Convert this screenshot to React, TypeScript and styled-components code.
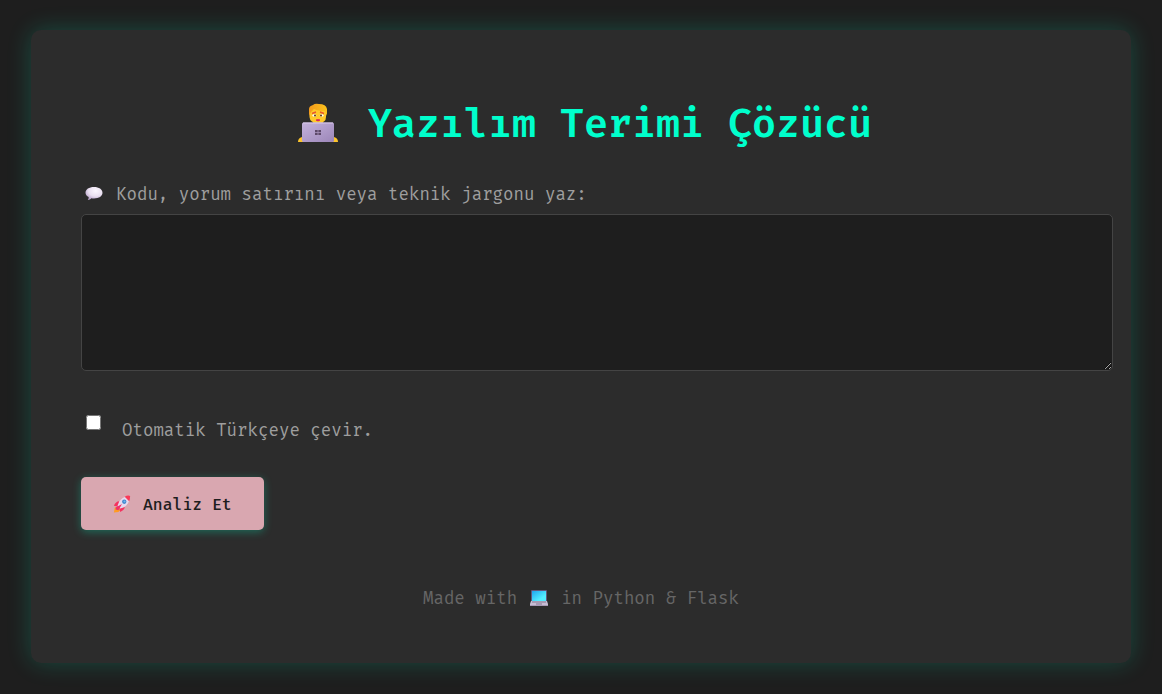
import React from "react";
import styled, { createGlobalStyle } from "styled-components";

const GlobalStyle = createGlobalStyle`
  body {
    margin: 0;
    background: #1e1e1e;
    color: #9e9e9e;
    font-family: "Fira Code", "DejaVu Sans Mono", monospace;
    font-size: 17px;
    line-height: 24px;
  }
`;

const Page = styled.div`
  padding: 30px;
`;

const Card = styled.main`
  box-sizing: border-box;
  max-width: 1100px;
  margin: 0 auto;
  padding: 63px 50px 53px;
  border-radius: 10px;
  background: #2c2c2c;
  box-shadow: 0 0 25px rgba(0, 255, 200, 0.2);
`;

const Title = styled.h1`
  display: flex;
  align-items: center;
  justify-content: center;
  gap: 30px;
  margin: 0;
  padding-left: 8px;
  color: #00ffcc;
  font-size: 39px;
  font-weight: 600;
  line-height: 56px;
`;

const TitleText = styled.span`
  padding-top: 4px;
`;

const Form = styled.form`
  margin: 29px 0 0;
`;

const Caption = styled.span`
  padding-top: 2px;
  line-height: 22px;
`;

const FieldLabel = styled.label`
  display: flex;
  align-items: center;
  gap: 13px;
  padding-left: 4px;
`;

const CodeInput = styled.textarea`
  display: block;
  width: 100%;
  height: 125px;
  margin: 8px 0 0;
  padding: 15px;
  border: 1px solid #444444;
  border-radius: 5px;
  background: #1e1e1e;
  color: #f0f0f0;
  font: inherit;
  resize: vertical;
`;

const CheckRow = styled.div`
  display: flex;
  align-items: flex-start;
  gap: 21px;
  margin-top: 44px;
  padding-left: 5px;
`;

const Checkbox = styled.input`
  width: 15px;
  height: 15px;
  margin: 0;
`;

const CheckLabel = styled.label`
  padding-top: 4px;
`;

const SubmitButton = styled.button`
  display: flex;
  align-items: center;
  gap: 12px;
  margin-top: 34px;
  padding: 15px 32px 14px;
  border: 0;
  border-radius: 5px;
  background: #d9a7b0;
  color: #1e1e1e;
  font: inherit;
  font-size: 16px;
  font-weight: 500;
  box-shadow: 0 2px 8px rgba(0, 255, 200, 0.3);
  cursor: pointer;
`;

const Footer = styled.footer`
  display: flex;
  align-items: center;
  justify-content: center;
  gap: 13px;
  margin-top: 56px;
  color: #666666;
`;

const Icon = styled.svg<{ $size: number }>`
  flex: none;
  display: block;
  width: ${(p) => p.$size}px;
  height: ${(p) => p.$size}px;
`;

const CoderIcon = () => (
  <Icon $size={40} viewBox="0 0 40 40" aria-hidden="true">
    <defs>
      <linearGradient id="lid" x1="0" y1="0" x2="1" y2="1">
        <stop offset="0" stopColor="#c4b2dc" />
        <stop offset="1" stopColor="#9c86b8" />
      </linearGradient>
      <linearGradient id="hair" x1="0" y1="0" x2="1" y2="0">
        <stop offset="0" stopColor="#f39a1d" />
        <stop offset="1" stopColor="#fcc21b" />
      </linearGradient>
    </defs>
    <path d="M0 39q0-4 4-5h32q4 1 4 5z" fill="#fdc52c" />
    <path d="M15 15h10v6H15z" fill="#ef9c1c" />
    <path d="M11.500 6h16.500v8q0 6-8 6t-8.500-6z" fill="#ffc929" />
    <path d="M11 13V6q0-3 4-4 2-2 6-1 7 0 8 5v7l-2-5q-7 0-11-2l-3 3z" fill="url(#hair)" />
    <path d="M14 10.500l4-1.500M22 9l4 1.500" stroke="#e8562e" strokeWidth="1.400" />
    <ellipse cx="16.300" cy="12.400" rx="1.900" ry="1.200" fill="#fff" />
    <ellipse cx="23.700" cy="12.400" rx="1.900" ry="1.200" fill="#fff" />
    <circle cx="17" cy="12.500" r="1.100" fill="#65452f" />
    <circle cx="23" cy="12.500" r="1.100" fill="#65452f" />
    <path d="M18 17q2-.8 4 0-2 2-4 0" fill="#d81f58" stroke="#d81f58" strokeWidth=".8" />
    <rect x="4" y="19.500" width="32" height="19.500" rx="1.500" fill="url(#lid)" />
    <path d="M5 20h30" stroke="#d9c9e9" />
    <path d="M17 27h6v5h-6z" fill="#5c4869" />
    <path d="M17 29.500h6M20 27v5" stroke="#a793bd" strokeWidth=".8" />
  </Icon>
);

const SpeechIcon = () => (
  <Icon $size={18} viewBox="0 0 18 18" aria-hidden="true">
    <defs>
      <radialGradient id="bubble" cx=".6" cy=".3" r=".7">
        <stop offset="0" stopColor="#fcf7ff" />
        <stop offset=".6" stopColor="#e9dff0" />
        <stop offset="1" stopColor="#baa4cb" />
      </radialGradient>
    </defs>
    <path
      d="M9 2c5 0 8.500 2.300 8.500 5.800S14 13.500 9 13.500c-1 0-2-.1-2.700-.3C5.500 14.300 4 15 2.800 14.900c.7-.8 1-1.700.9-2.800C1.700 11.200.5 9.600.5 7.800.5 4.300 4 2 9 2z"
      fill="url(#bubble)"
    />
  </Icon>
);

const RocketIcon = () => (
  <Icon $size={18} viewBox="0 0 20 20" aria-hidden="true">
    <path d="M2 14l4-1 2 4-2 2-5 .5z" fill="#ff9b23" />
    <path d="M7 7q-4 0-6 5l5 1zM13 13q0 4-5 6l-1-5z" fill="#f5325f" />
    <path d="M5 12Q7 4 14 2l4 4q-2 7-10 9z" fill="#e6d9ee" />
    <path d="M13 2q3-2 6-1 0 3-1 6z" fill="#fa3a59" />
    <path d="M3 14l7-4-4 7-3-1z" fill="#f0306a" />
    <circle cx="12.500" cy="7.500" r="2.400" fill="#4184cd" />
    <circle cx="12.800" cy="7.200" r="1.200" fill="#6fb7ef" />
  </Icon>
);

const LaptopIcon = () => (
  <Icon $size={18} viewBox="0 0 18 18" aria-hidden="true">
    <defs>
      <linearGradient id="screen" x1="0" y1="0" x2="1" y2="1">
        <stop offset="0" stopColor="#20a4ef" />
        <stop offset=".7" stopColor="#52edff" />
      </linearGradient>
    </defs>
    <rect x="1" y="1" width="16" height="12" rx="1" fill="#61577d" />
    <rect x="2" y="2" width="14" height="10" fill="url(#screen)" />
    <path d="M1 12h16l1 3v2H0v-2z" fill="#c7bdd3" />
    <path d="M2 13h14M6 15h6" stroke="#857791" />
    <path d="M0 16.500h18" stroke="#a79ab5" />
  </Icon>
);

export default function App() {
  return (
    <>
      <GlobalStyle />
      <Page>
        <Card>
          <Title>
            <CoderIcon />
            <TitleText>Yazılım Terimi Çözücü</TitleText>
          </Title>
          <Form onSubmit={(e) => e.preventDefault()}>
            <FieldLabel htmlFor="term">
              <SpeechIcon />
              <Caption>Kodu, yorum satırını veya teknik jargonu yaz:</Caption>
            </FieldLabel>
            <CodeInput id="term" name="term" />
            <CheckRow>
              <Checkbox type="checkbox" id="translate" name="translate" />
              <CheckLabel htmlFor="translate">Otomatik Türkçeye çevir.</CheckLabel>
            </CheckRow>
            <SubmitButton type="submit">
              <RocketIcon />
              <Caption>Analiz Et</Caption>
            </SubmitButton>
          </Form>
          <Footer>
            <Caption>Made with</Caption>
            <LaptopIcon />
            <Caption>in Python &amp; Flask</Caption>
          </Footer>
        </Card>
      </Page>
    </>
  );
}
